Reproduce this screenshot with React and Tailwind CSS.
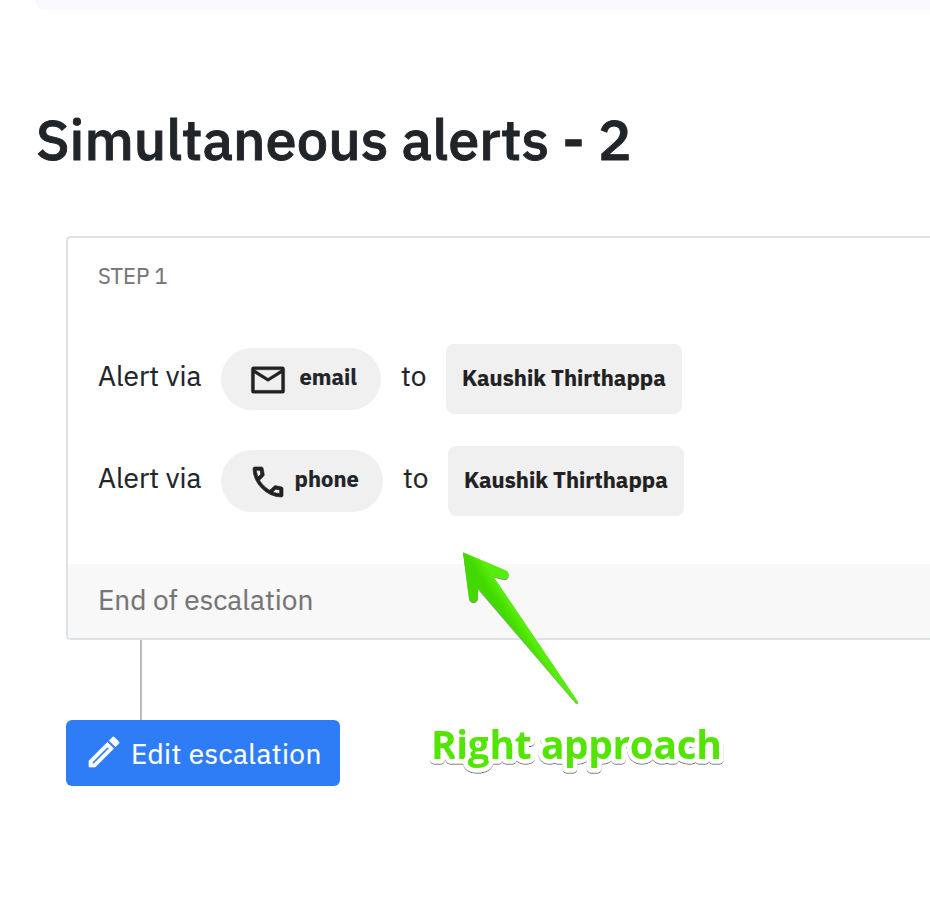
import React from "react";

function MailIcon() {
  return (
    <svg viewBox="0 0 24 24" className="mt-0.5 size-10 shrink-0 fill-[#212121] stroke-[#212121] stroke-[0.2]">
      <path
        fillRule="evenodd"
        d="M3.3 4H20.7Q22 4 22 5.3V18.7Q22 20 20.7 20H3.3Q2 20 2 18.7V5.3Q2 4 3.3 4ZM12 12.9L3.9 7.9V18.2H20.1V7.9ZM12 10.9L20 5.9H4Z"
      />
    </svg>
  );
}

function PhoneIcon() {
  return (
    <svg viewBox="0 0 24 24" className="mt-0.5 size-10 shrink-0 fill-[#212121] stroke-[#212121] stroke-[0.4]">
      <path d="M19.95 21q-3.125 0-6.175-1.362t-5.55-3.863-3.862-5.55T3 4.05q0-.45.3-.75t.75-.3H8.1q.35 0 .625.238t.325.562l.65 3.5q.05.4-.025.675T9.4 8.45L6.975 10.9q.5.925 1.187 1.787t1.513 1.663q.775.775 1.625 1.438T13.1 17l2.35-2.35q.225-.225.588-.337t.712-.063l3.45.7q.35.1.575.363T21 15.9v4.05q0 .45-.3.75t-.75.3M6.025 9l1.65-1.65L7.25 5H5.025q.125 1.025.35 2.025T6.025 9m8.95 8.95q.975.425 1.988.675T19 18.95v-2.2l-2.35-.475z" />
    </svg>
  );
}

function PencilIcon() {
  return (
    <svg viewBox="0 0 24 24" className="mb-0.5 size-10 shrink-0 fill-white stroke-white stroke-[0.4]">
      <path d="M14.06 9.02l.92.92L5.92 19H5v-.92l9.06-9.06M17.66 3c-.25 0-.51.1-.7.29l-1.83 1.83 3.75 3.75 1.83-1.83c.39-.39.39-1.02 0-1.41l-2.34-2.34c-.2-.2-.45-.29-.71-.29zm-3.6 3.19L3 17.25V21h3.75L17.81 9.94l-3.75-3.75z" />
    </svg>
  );
}

function AlertRow({ icon, label, pill, gap }) {
  return (
    <div className="flex h-[70px] items-center">
      <span className="-mt-1.5 w-[123px] whitespace-nowrap text-[28px] leading-10">Alert via</span>
      <span className={`flex h-[62px] shrink-0 items-center rounded-full bg-[#f0f0f0] pl-[27px] ${pill}`}>
        {icon}
        <span className={`-mt-1.5 text-[22px] font-bold ${gap}`}>{label}</span>
      </span>
      <span className="-mt-1.5 ml-5 w-[45px] text-[28px] leading-10">to</span>
      <span className="flex h-[70px] w-[236px] shrink-0 items-center rounded-lg bg-[#f0f0f0] px-4 pb-1 text-[22px] font-bold whitespace-nowrap text-[#212121]">
        Kaushik Thirthappa
      </span>
    </div>
  );
}

export default function App() {
  return (
    <main className="relative h-[924px] w-full overflow-hidden bg-white pl-9 font-['IBM_Plex_Sans',Roboto,sans-serif] text-[#212529] antialiased [-webkit-text-stroke:0.2px]">
      <div className="h-2.5 rounded-bl-lg bg-[#f8f9fc]" />
      <h1 className="mt-[95px] h-[131px] text-[56px] leading-[68px] font-medium whitespace-nowrap [-webkit-text-stroke:0.9px]">
        Simultaneous alerts - 2
      </h1>

      <section className="ml-[30px] h-[404px] rounded-l-[5px] border-2 border-r-0 border-[#dee2e6]">
        <div className="h-[326px] pl-[30px]">
          <div className="h-[106px] pt-[22px] text-[22px] leading-8 text-[#757575]">STEP 1</div>
          <div className="flex flex-col gap-8">
            <AlertRow icon={<MailIcon />} label="email" pill="w-40" gap="ml-[11.5px]" />
            <AlertRow icon={<PhoneIcon />} label="phone" pill="w-[162px]" gap="ml-[6.5px]" />
          </div>
        </div>
        <div className="flex h-[74px] items-center rounded-bl-[3px] bg-[#f8f8f8] pb-0.5 pl-[30px] text-[28px] text-[#757575]">
          <span>End of escalation</span>
        </div>
      </section>

      <div className="ml-[104px] h-20 w-0.5 bg-[#bdbdbd]" />
      <button className="ml-[30px] flex h-[66px] w-[274px] items-center rounded-md bg-[#2f7df6] pl-[18px] text-[28px] whitespace-nowrap text-white">
        <PencilIcon />
        <span className="mt-0.5 ml-[7px] tracking-[0.4px]">Edit escalation</span>
      </button>

      <svg className="absolute top-[540px] left-[440px]" width="160" height="180" viewBox="0 0 160 180">
        <defs>
          <linearGradient id="arrowFill" gradientUnits="userSpaceOnUse" x1="62" y1="88" x2="84" y2="74">
            <stop offset="0" stopColor="#43d900" />
            <stop offset="0.35" stopColor="#43d900" />
            <stop offset="0.75" stopColor="#56ec08" />
            <stop offset="1" stopColor="#56ec08" />
          </linearGradient>
          <filter id="arrowShadow" x="-10%" y="-10%" width="120%" height="120%">
            <feDropShadow dx="0" dy="0.8" stdDeviation="0.4" floodColor="#000" floodOpacity="0.6" />
          </filter>
        </defs>
        <path
          d="M23 12.3L65.5 30.3C71 33 69 40.5 63 39L53.5 36.5L137.5 161C138.5 163 137 164 135.5 162.5L38 48.5L38 58C37.5 63.5 29.5 63 29 58Z"
          fill="url(#arrowFill)"
          filter="url(#arrowShadow)"
        />
      </svg>

      <svg className="absolute top-[710px] left-[420px]" width="320" height="80" viewBox="0 0 320 80">
        <defs>
          <filter id="labelShadow" x="-5%" y="-10%" width="110%" height="130%">
            <feDropShadow dx="0" dy="1" stdDeviation="0.6" floodColor="#000" floodOpacity="0.65" />
          </filter>
        </defs>
        <text
          x="11"
          y="49"
          textLength="291"
          className="fill-[#52e500] stroke-white stroke-[9px] font-['Open_Sans','Noto_Sans',sans-serif] text-[39px] font-bold [paint-order:stroke]"
          strokeLinejoin="round"
          filter="url(#labelShadow)"
        >
          Right approach
        </text>
      </svg>
    </main>
  );
}
